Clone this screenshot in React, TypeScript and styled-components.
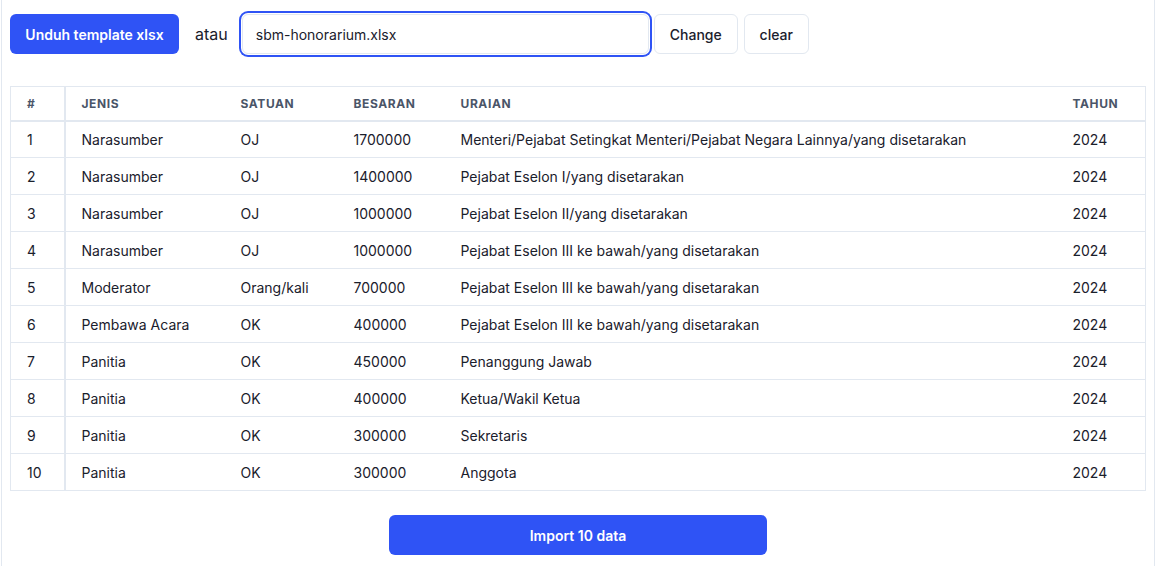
import React from "react";
import styled, { createGlobalStyle } from "styled-components";

interface Row {
  jenis: string;
  satuan: string;
  besaran: number;
  uraian: string;
  tahun: number;
}

const rows: Row[] = [
  { jenis: "Narasumber", satuan: "OJ", besaran: 1700000, uraian: "Menteri/Pejabat Setingkat Menteri/Pejabat Negara Lainnya/yang disetarakan", tahun: 2024 },
  { jenis: "Narasumber", satuan: "OJ", besaran: 1400000, uraian: "Pejabat Eselon I/yang disetarakan", tahun: 2024 },
  { jenis: "Narasumber", satuan: "OJ", besaran: 1000000, uraian: "Pejabat Eselon II/yang disetarakan", tahun: 2024 },
  { jenis: "Narasumber", satuan: "OJ", besaran: 1000000, uraian: "Pejabat Eselon III ke bawah/yang disetarakan", tahun: 2024 },
  { jenis: "Moderator", satuan: "Orang/kali", besaran: 700000, uraian: "Pejabat Eselon III ke bawah/yang disetarakan", tahun: 2024 },
  { jenis: "Pembawa Acara", satuan: "OK", besaran: 400000, uraian: "Pejabat Eselon III ke bawah/yang disetarakan", tahun: 2024 },
  { jenis: "Panitia", satuan: "OK", besaran: 450000, uraian: "Penanggung Jawab", tahun: 2024 },
  { jenis: "Panitia", satuan: "OK", besaran: 400000, uraian: "Ketua/Wakil Ketua", tahun: 2024 },
  { jenis: "Panitia", satuan: "OK", besaran: 300000, uraian: "Sekretaris", tahun: 2024 },
  { jenis: "Panitia", satuan: "OK", besaran: 300000, uraian: "Anggota", tahun: 2024 },
];

const columns = [
  { label: "#", width: 54 },
  { label: "Jenis", width: 160 },
  { label: "Satuan", width: 113 },
  { label: "Besaran", width: 107 },
  { label: "Uraian", width: 612 },
  { label: "Tahun", width: 89 },
];

const App: React.FC = () => (
  <>
    <GlobalStyle />
    <Panel>
      <Toolbar>
        <PrimaryButton>Unduh template xlsx</PrimaryButton>
        <OrText>atau</OrText>
        <FileInput defaultValue="sbm-honorarium.xlsx" />
        <GhostButton $width={84}>Change</GhostButton>
        <GhostButton $width={65}>clear</GhostButton>
      </Toolbar>

      <Table>
        <colgroup>
          {columns.map((c) => (
            <col key={c.label} style={{ width: c.width }} />
          ))}
        </colgroup>
        <thead>
          <tr>
            {columns.map((c, i) => (
              <Th key={c.label} $first={i === 0}>
                {c.label}
              </Th>
            ))}
          </tr>
        </thead>
        <tbody>
          {rows.map((r, i) => (
            <tr key={i}>
              <Td $first>{i + 1}</Td>
              <Td>{r.jenis}</Td>
              <Td>{r.satuan}</Td>
              <Td>{r.besaran}</Td>
              <Td>{r.uraian}</Td>
              <Td>{r.tahun}</Td>
            </tr>
          ))}
        </tbody>
      </Table>

      <Footer>
        <ImportButton>Import 10 data</ImportButton>
      </Footer>
    </Panel>
  </>
);

const GlobalStyle = createGlobalStyle`
  body {
    margin: 0;
    background: #ffffff;
    font-family: Inter, "Noto Sans", "Liberation Sans", sans-serif;
    color: #1a202c;
  }
  * {
    box-sizing: border-box;
  }
`;

const Panel = styled.div`
  margin-left: 1px;
  width: 1154px;
  min-height: 566px;
  border-left: 1px solid #e2e8f0;
  border-right: 1px solid #e2e8f0;
  padding: 14px 8px 0 8px;
`;

const Toolbar = styled.div`
  display: flex;
  align-items: center;
  height: 40px;
`;

const PrimaryButton = styled.button`
  width: 169px;
  height: 40px;
  padding: 0;
  border: none;
  border-radius: 6px;
  background: #2f53f5;
  color: #ffffff;
  font-family: inherit;
  font-size: 14px;
  font-weight: 600;
  cursor: pointer;
`;

const OrText = styled.span`
  margin-left: 16px;
  font-size: 16px;
  color: #1a202c;
`;

const FileInput = styled.input`
  margin-left: 14px;
  width: 407px;
  height: 40px;
  padding: 0 13px;
  border: 1px solid #e2e8f0;
  border-radius: 6px;
  font-family: inherit;
  font-size: 14px;
  color: #1a202c;
  box-shadow: 0 0 0 1px #ffffff, 0 0 0 3px #2f53f5;
  outline: none;
`;

const GhostButton = styled.button<{ $width: number }>`
  margin-left: 5px;
  width: ${(p) => p.$width}px;
  height: 40px;
  padding: 0;
  background: #ffffff;
  border: 1px solid #e2e8f0;
  border-radius: 6px;
  font-family: inherit;
  font-size: 14px;
  font-weight: 500;
  color: #1a202c;
  cursor: pointer;

  & + & {
    margin-left: 6px;
  }
`;

const Table = styled.table`
  margin-top: 32px;
  width: 1135px;
  table-layout: fixed;
  border-collapse: collapse;
  border: 1px solid #e2e8f0;
`;

const Th = styled.th<{ $first?: boolean }>`
  height: 34px;
  padding: 1px 16px 0;
  text-align: left;
  font-size: 12px;
  font-weight: 700;
  letter-spacing: 0.05em;
  text-transform: uppercase;
  color: #4a5568;
  border-bottom: 2px solid #e2e8f0;
  border-right: ${(p) => (p.$first ? "2px solid #e2e8f0" : "none")};
`;

const Td = styled.td<{ $first?: boolean }>`
  height: 37px;
  padding: 0 16px;
  font-size: 14px;
  color: #1a202c;
  border-bottom: 1px solid #e2e8f0;
  border-right: ${(p) => (p.$first ? "2px solid #e2e8f0" : "none")};
  white-space: nowrap;
`;

const Footer = styled.div`
  display: flex;
  justify-content: center;
  margin-top: 24px;
`;

const ImportButton = styled.button`
  width: 378px;
  height: 40px;
  border: none;
  border-radius: 6px;
  background: #2f53f5;
  color: #ffffff;
  font-family: inherit;
  font-size: 14px;
  font-weight: 600;
  cursor: pointer;
`;

export default App;
